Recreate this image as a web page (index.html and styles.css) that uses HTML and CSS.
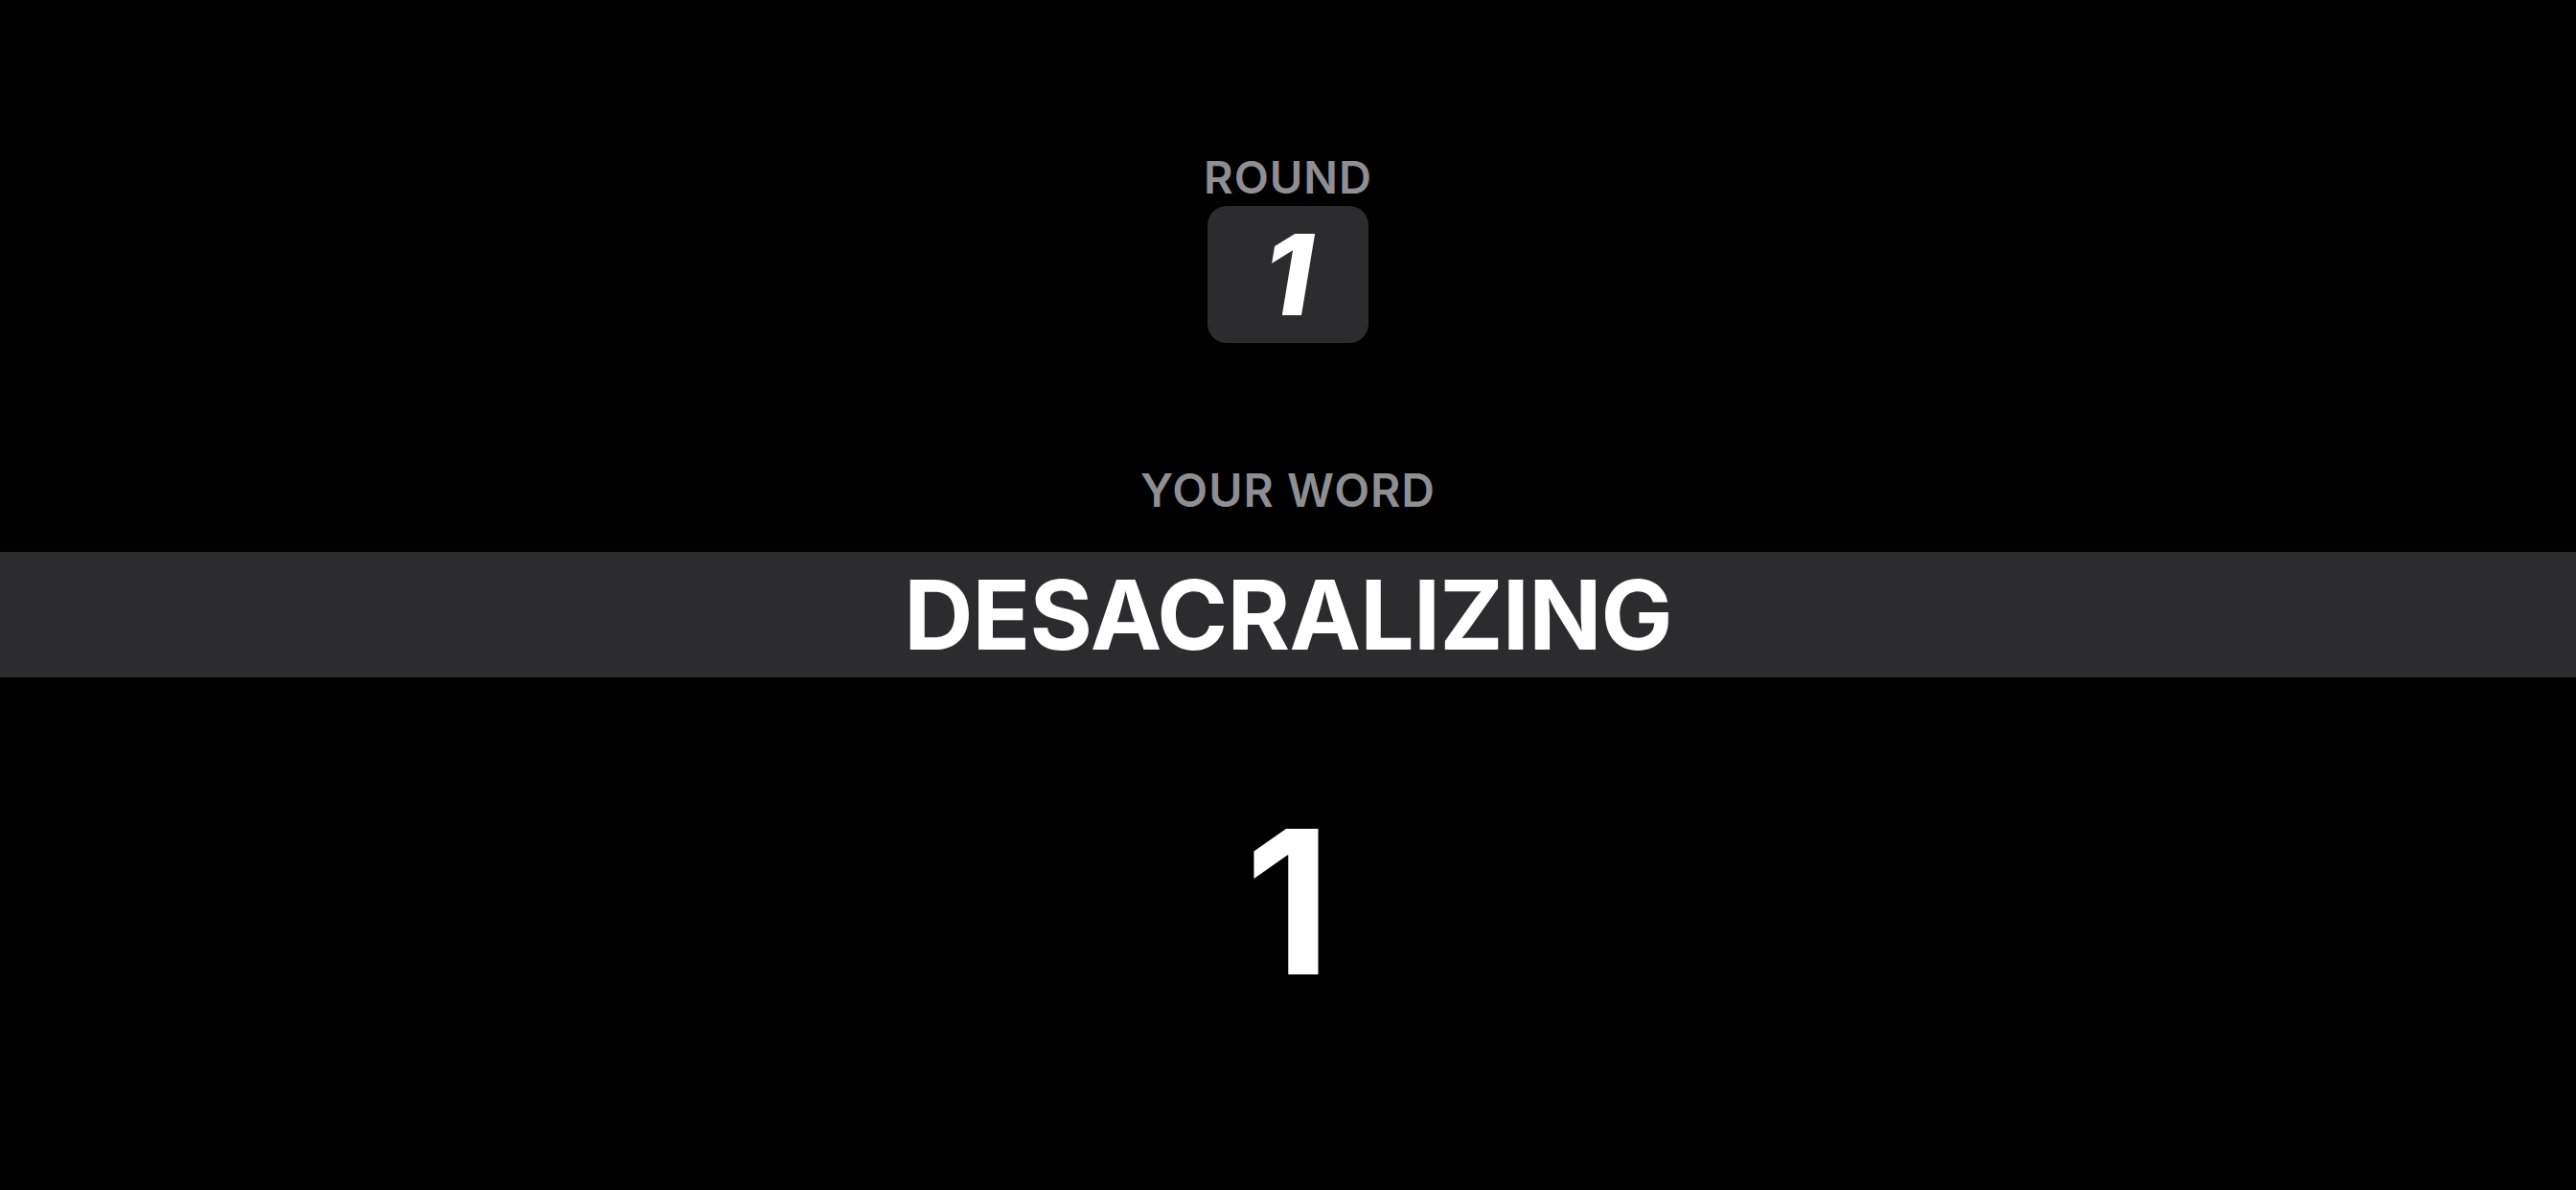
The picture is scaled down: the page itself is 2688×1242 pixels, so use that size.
FILE: index.html
```html
<!DOCTYPE html>
<html lang="en">
	<head>
		<meta charset="UTF-8" />
		<meta name="viewport" content="width=device-width, initial-scale=1.0" />
		<title>Round</title>
		<link rel="stylesheet" href="styles.css">
	</head>
	<body>
		<div class="screen">
			<div class="round">
				<p class="label">ROUND</p>
				<div class="tile"><span>1</span></div>
			</div>
			<p class="label word-label">YOUR WORD</p>
			<div class="word">
				<h1>DESACRALIZING</h1>
			</div>
			<p class="count">1</p>
		</div>
	</body>
</html>
```

FILE: styles.css
```css
* {
	margin: 0;
	padding: 0;
	box-sizing: border-box;
}
body {
	background-color: #000;
	color: #fff;
	font-family: Inter, "Noto Sans", sans-serif;
	height: 100vh;
	overflow: hidden;
}
.screen {
	display: flex;
	flex-direction: column;
	align-items: center;
	padding-top: 161px;

	.round {
		display: flex;
		flex-direction: column;
		align-items: center;
		gap: 7px;
	}
	.label {
		font-size: 47px;
		line-height: 1;
		font-weight: 600;
		letter-spacing: 1px;
		color: #8e8e93;
	}
	.tile {
		display: flex;
		justify-content: center;
		align-items: center;
		width: 168px;
		height: 143px;
		border-radius: 20px;
		background-color: #2c2c2e;

		span {
			font-size: 117px;
			line-height: 1;
			font-weight: 800;
			font-style: italic;
		}
	}
	.word-label {
		margin-top: 130px;
		font-size: 48px;
	}
	.word {
		width: 100%;
		height: 131px;
		margin-top: 40px;
		display: flex;
		justify-content: center;
		align-items: center;
		background-color: #2c2c2e;

		h1 {
			font-size: 100px;
			line-height: 1;
			font-weight: 700;
			letter-spacing: -0.8px;
		}
	}
	.count {
		margin-top: 130px;
		font-size: 209px;
		line-height: 1;
		font-weight: 700;
	}
}
```
